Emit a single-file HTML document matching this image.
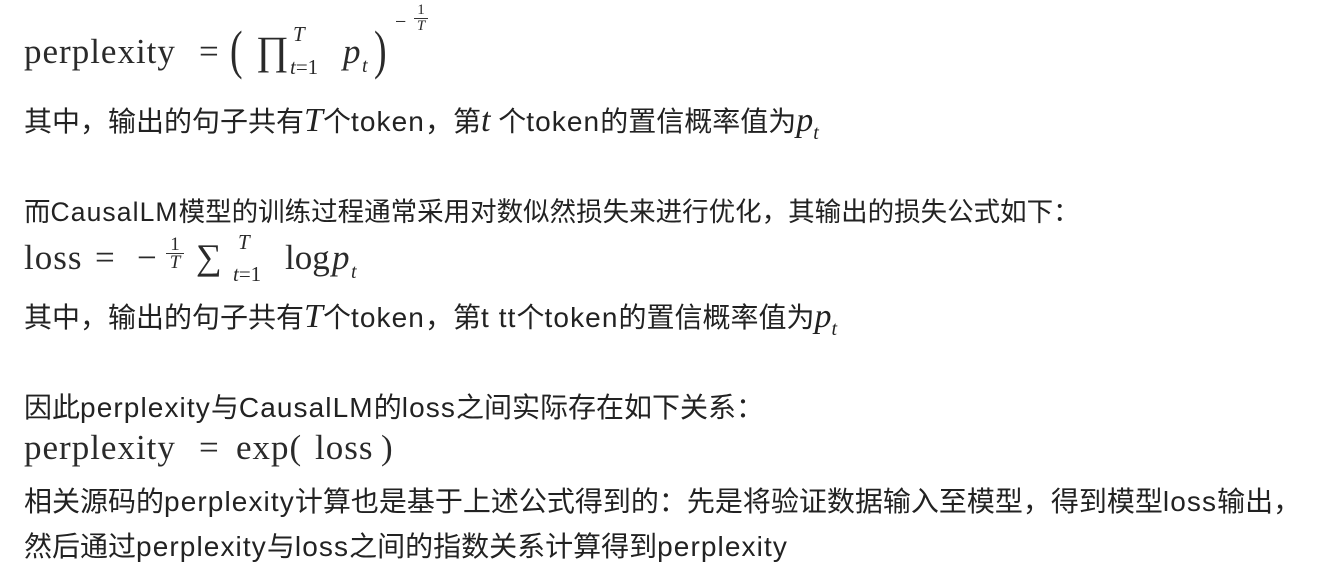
<!DOCTYPE html>
<html><head><meta charset="utf-8"><style>
body{margin:0;width:1335px;height:569px;background:#fff;overflow:hidden;position:relative;color:#222;}
.t{position:absolute;left:24px;white-space:nowrap;font-family:"Liberation Sans","Noto Sans CJK SC",sans-serif;font-size:28px;line-height:30px;}
.t b{font-weight:normal;letter-spacing:1.1px;}
.m{position:absolute;white-space:nowrap;font-family:"Liberation Serif","DejaVu Serif",serif;font-size:35px;color:#2a2a2a;line-height:40px;}
.s{font-size:20px;line-height:20px;}
i{font-family:"Liberation Serif",serif;font-size:34px;}
.t sub{font-size:20px;}
</style></head><body>
<!-- formula 1 -->
<div class="m" style="left:24px;top:32px;letter-spacing:1px">perplexity</div>
<div class="m" style="left:199px;top:32px">=</div>
<div class="m" style="left:230px;top:20px;font-size:54px;line-height:60px;transform:scaleX(.7);transform-origin:left">(</div>
<div class="m" style="left:256px;top:31px;font-size:40px">∏</div>
<div class="m s" style="left:293px;top:24px"><i style="font-size:21px">T</i></div>
<div class="m s" style="left:290px;top:57px;font-size:21px"><i style="font-size:21px">t</i>=1</div>
<div class="m" style="left:343px;top:32px"><i style="font-size:35px">p</i></div>
<div class="m s" style="left:362px;top:56px"><i style="font-size:20px">t</i></div>
<div class="m" style="left:374px;top:20px;font-size:54px;line-height:60px;transform:scaleX(.7);transform-origin:left">)</div>
<div class="m s" style="left:395px;top:12px;font-size:20px">−</div>
<div class="m" style="left:414px;top:3px;font-size:15px;line-height:15px;text-align:center;width:14px">1<div style="border-top:1px solid #333"></div><i style="font-size:15px">T</i></div>

<div class="t" style="top:106px">其中，输出的句子共有<i>T</i>个<b>token</b>，第<i>t</i> 个<b>token</b>的置信概率值为<i>p<sub>t</sub></i></div>
<div class="t" style="top:197px;font-size:26.5px">而<b>CausalLM</b>模型的训练过程通常采用对数似然损失来进行优化，其输出的损失公式如下：</div>

<!-- formula 2 -->
<div class="m" style="left:24px;top:238px;letter-spacing:1px">loss</div>
<div class="m" style="left:95px;top:238px">=</div>
<div class="m" style="left:137px;top:238px">−</div>
<div class="m" style="left:166px;top:236px;font-size:19px;line-height:17px;text-align:center;width:18px">1<div style="border-top:1px solid #333"></div><i style="font-size:19px">T</i></div>
<div class="m" style="left:196px;top:237px;font-size:36px">∑</div>
<div class="m s" style="left:238px;top:232px"><i style="font-size:21px">T</i></div>
<div class="m s" style="left:233px;top:264px;font-size:21px"><i style="font-size:21px">t</i>=1</div>
<div class="m" style="left:285px;top:238px">log</div>
<div class="m" style="left:332px;top:238px"><i style="font-size:35px">p</i></div>
<div class="m s" style="left:351px;top:262px"><i style="font-size:20px">t</i></div>

<div class="t" style="top:302px">其中，输出的句子共有<i>T</i>个<b>token</b>，第<b>t tt</b>个<b>token</b>的置信概率值为<i>p<sub>t</sub></i></div>
<div class="t" style="top:393px">因此<b>perplexity</b>与<b>CausalLM</b>的<b>loss</b>之间实际存在如下关系：</div>

<!-- formula 3 -->
<div class="m" style="left:24px;top:428px;letter-spacing:1px">perplexity</div>
<div class="m" style="left:199px;top:428px">=</div>
<div class="m" style="left:236px;top:428px;letter-spacing:1px">exp(</div>
<div class="m" style="left:315px;top:428px;letter-spacing:1px">loss</div>
<div class="m" style="left:381px;top:428px">)</div>

<div class="t" style="top:487px">相关源码的<b>perplexity</b>计算也是基于上述公式得到的：先是将验证数据输入至模型，得到模型<b>loss</b>输出，</div>
<div class="t" style="top:532px">然后通过<b>perplexity</b>与<b>loss</b>之间的指数关系计算得到<b>perplexity</b></div>
</body></html>
